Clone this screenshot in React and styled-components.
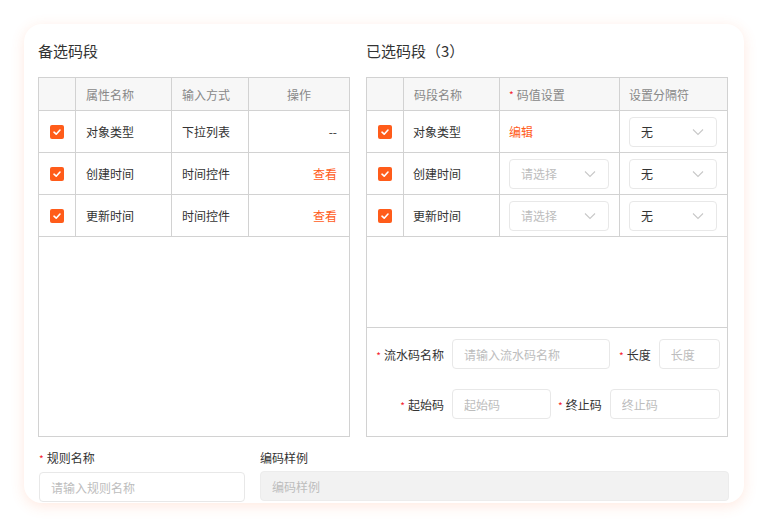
import React from 'react'
import styled, { createGlobalStyle } from 'styled-components';

const GlobalStyle = createGlobalStyle`
  html, body {
    margin: 0;
    padding: 0;
    background: #fff;
  }
  body {
    font-family: "Noto Sans CJK SC", "Noto Sans", sans-serif;
    color: #333;
  }
  * { box-sizing: border-box; }
`;

const ORANGE = '#ff5c1a';

const leftRows = [
  { name: '对象类型', mode: '下拉列表', op: '--' },
  { name: '创建时间', mode: '时间控件', op: '查看' },
  { name: '更新时间', mode: '时间控件', op: '查看' },
];

const rightRows = [
  { name: '对象类型', value: 'edit', sep: '无' },
  { name: '创建时间', value: 'select', sep: '无' },
  { name: '更新时间', value: 'select', sep: '无' },
];

function Check() {
  return (
    <CheckBox>
      <svg width="10" height="10" viewBox="0 0 10 10">
        <path d="M2 5.2 L4.2 7.2 L8 3" fill="none" stroke="#fff" strokeWidth="1.6" strokeLinecap="round" strokeLinejoin="round" />
      </svg>
    </CheckBox>
  )
}

function Chevron() {
  return (
    <svg width="12" height="8" viewBox="0 0 12 8">
      <path d="M1 1.5 L6 6.5 L11 1.5" fill="none" stroke="#c8c8c8" strokeWidth="1.1" />
    </svg>
  )
}

function Select({ value, placeholder, width }) {
  return (
    <SelectBox $width={width}>
      <SelectText $placeholder={!value}>{value || placeholder}</SelectText>
      <Chevron />
    </SelectBox>
  )
}

function App() {
  return (
    <>
      <GlobalStyle />
      <Page>
        <Card>
          <Columns>
            <Panel $width={312}>
              <Title>备选码段</Title>
              <TableBox>
                <Row $cols="37px 96px 77px 1fr" $head>
                  <Cell />
                  <Cell $pad="10px">属性名称</Cell>
                  <Cell $pad="10px">输入方式</Cell>
                  <Cell $align="center" $last>操作</Cell>
                </Row>
                {leftRows.map((r) => (
                  <Row key={r.name} $cols="37px 96px 77px 1fr">
                    <Cell $align="center"><Check /></Cell>
                    <Cell $pad="10px">{r.name}</Cell>
                    <Cell $pad="10px">{r.mode}</Cell>
                    <Cell $align="flex-end" $pad="12px" $last>
                      {r.op === '--' ? r.op : <Link>{r.op}</Link>}
                    </Cell>
                  </Row>
                ))}
              </TableBox>
            </Panel>

            <Panel $width={362}>
              <Title>已选码段（3）</Title>
              <TableBox>
                <Row $cols="37px 96px 120px 1fr" $head>
                  <Cell />
                  <Cell $pad="10px">码段名称</Cell>
                  <Cell $pad="9px"><Star>*</Star>码值设置</Cell>
                  <Cell $pad="9px" $last>设置分隔符</Cell>
                </Row>
                {rightRows.map((r) => (
                  <Row key={r.name} $cols="37px 96px 120px 1fr">
                    <Cell $align="center"><Check /></Cell>
                    <Cell $pad="9px">{r.name}</Cell>
                    <Cell $pad="9px">
                      {r.value === 'edit' ? <Link>编辑</Link> : <Select placeholder="请选择" width={100} />}
                    </Cell>
                    <Cell $pad="9px" $last><Select value={r.sep} width={88} /></Cell>
                  </Row>
                ))}
                <Spacer />
                <FormArea>
                  <FormRow>
                    <FieldLabel $width={77}><Star>*</Star>流水码名称</FieldLabel>
                    <Input $width={158} placeholder="请输入流水码名称" />
                    <FieldLabel $gap={9}><Star>*</Star>长度</FieldLabel>
                    <Input $fill placeholder="长度" />
                  </FormRow>
                  <FormRow>
                    <FieldLabel $width={77}><Star>*</Star>起始码</FieldLabel>
                    <Input $width={99} placeholder="起始码" />
                    <FieldLabel $gap={7}><Star>*</Star>终止码</FieldLabel>
                    <Input $fill placeholder="终止码" />
                  </FormRow>
                </FormArea>
              </TableBox>
            </Panel>
          </Columns>

          <BottomRow>
            <BottomField $width={206}>
              <SmallLabel><Star>*</Star>规则名称</SmallLabel>
              <Input $width={206} placeholder="请输入规则名称" />
            </BottomField>
            <BottomField $grow>
              <SmallLabel>编码样例</SmallLabel>
              <Input $disabled placeholder="编码样例" disabled />
            </BottomField>
          </BottomRow>
        </Card>
      </Page>
    </>
  )
}

export default App

const Page = styled.div`
  width: 768px;
  height: 528px;
  padding: 24px 24px 0 24px;
`;

const Card = styled.div`
  width: 720px;
  height: 479px;
  background: #fff;
  border-radius: 18px;
  box-shadow: 0 3px 14px rgba(255, 120, 60, 0.16);
  padding: 16px 15px 3px 14px;
  display: flex;
  flex-direction: column;
`;

const Columns = styled.div`
  display: flex;
  gap: 16px;
`;

const Panel = styled.div`
  width: ${(p) => p.$width}px;
  display: flex;
  flex-direction: column;
`;

const Title = styled.div`
  font-size: 15px;
  line-height: 22px;
  color: #333;
  margin-bottom: 15px;
`;

const TableBox = styled.div`
  height: 360px;
  border: 1px solid #d2d2d2;
  display: flex;
  flex-direction: column;
`;

const Row = styled.div`
  display: grid;
  grid-template-columns: ${(p) => p.$cols};
  height: ${(p) => (p.$head ? 33 : 42)}px;
  flex-shrink: 0;
  border-bottom: 1px solid #d2d2d2;
  background: ${(p) => (p.$head ? '#f7f7f7' : '#fff')};
  color: ${(p) => (p.$head ? '#888' : '#333')};
  font-size: 12px;
`;

const Cell = styled.div`
  display: flex;
  align-items: center;
  justify-content: ${(p) => p.$align || 'flex-start'};
  padding: 0 ${(p) => p.$pad || '0'};
  border-right: ${(p) => (p.$last ? 'none' : '1px solid #d2d2d2')};
  white-space: nowrap;
`;

const CheckBox = styled.span`
  width: 14px;
  height: 14px;
  border-radius: 2px;
  background: ${ORANGE};
  display: inline-flex;
  align-items: center;
  justify-content: center;
`;

const Link = styled.span`
  color: ${ORANGE};
  font-size: 12px;
`;

const Star = styled.span`
  color: #f5222d;
  margin-right: 3px;
  font-size: 10px;
`;

const SelectBox = styled.div`
  width: ${(p) => p.$width}px;
  height: 30px;
  border: 1px solid #e8e8e8;
  border-radius: 4px;
  display: flex;
  align-items: center;
  justify-content: space-between;
  padding: 0 12px 0 11px;
  background: #fff;
`;

const SelectText = styled.span`
  font-size: 12px;
  color: ${(p) => (p.$placeholder ? '#bdbdbd' : '#333')};
`;

const Spacer = styled.div`
  height: 91px;
  flex-shrink: 0;
  border-bottom: 1px solid #d2d2d2;
`;

const FormArea = styled.div`
  flex: 1;
  display: flex;
  flex-direction: column;
  gap: 20px;
  padding: 11px 7px 0 0;
`;

const FormRow = styled.div`
  display: flex;
  align-items: center;
  gap: 8px;
`;

const FieldLabel = styled.label`
  width: ${(p) => (p.$width ? `${p.$width}px` : 'auto')};
  margin-left: ${(p) => (p.$gap ? p.$gap - 8 : 0)}px;
  flex-shrink: 0;
  text-align: right;
  font-size: 12px;
  color: #333;
  white-space: nowrap;
`;

const Input = styled.input`
  width: ${(p) => (p.$width ? `${p.$width}px` : '100%')};
  flex: ${(p) => (p.$fill ? 1 : 'none')};
  min-width: 0;
  height: 30px;
  border: 1px solid ${(p) => (p.$disabled ? '#ececec' : '#e8e8e8')};
  background: ${(p) => (p.$disabled ? '#f2f2f2' : '#fff')};
  border-radius: 4px;
  padding: 0 11px;
  font-family: "Noto Sans CJK SC", "Noto Sans", sans-serif;
  font-size: 12px;
  outline: none;
  &::placeholder {
    color: #bdbdbd;
  }
`;

const BottomRow = styled.div`
  display: flex;
  gap: 15px;
  margin-top: 13px;
`;

const BottomField = styled.div`
  display: flex;
  flex-direction: column;
  gap: 5px;
  width: ${(p) => (p.$grow ? 'auto' : `${p.$width}px`)};
  flex: ${(p) => (p.$grow ? 1 : 'none')};
  margin-left: ${(p) => (p.$grow ? '0' : '1px')};
`;

const SmallLabel = styled.div`
  font-size: 12px;
  line-height: 16px;
  color: #333;
`;
